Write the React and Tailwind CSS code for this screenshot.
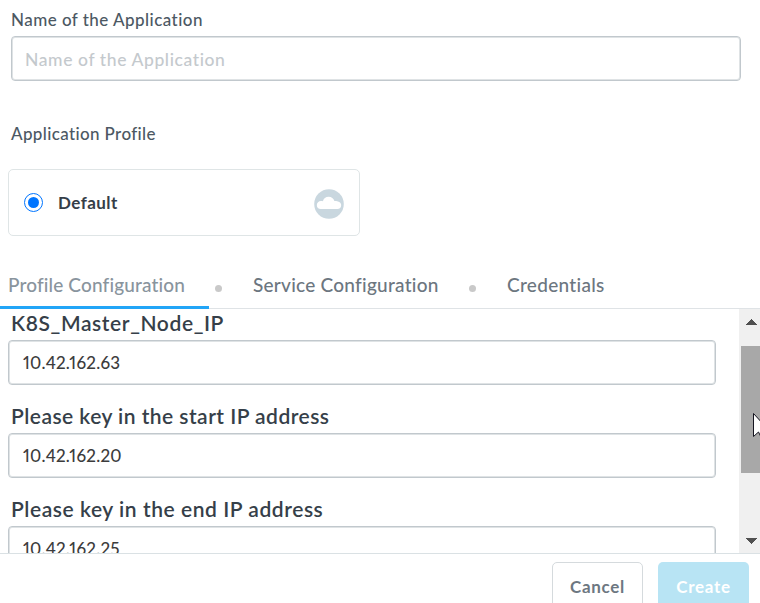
import React from "react";

const fields = [
  { label: "K8S_Master_Node_IP", value: "10.42.162.63", spacing: "tracking-[0.6px]" },
  { label: "Please key in the start IP address", value: "10.42.162.20", spacing: "tracking-[0.46px]" },
  { label: "Please key in the end IP address", value: "10.42.162.25", spacing: "tracking-[0.55px]" },
];

function CloudBadge() {
  return (
    <svg className="mt-[2px] h-[30px] w-[30px]" viewBox="0 0 30 30">
      <circle cx="15" cy="15" r="14.8" fill="#c9d7df" />
      <path
        d="M7 20a4.1 4.1 0 0 1-4.2-4c0-2.300 1.900-4.100 4.200-4.100.8 0 1.300.1 1.900.4A6 6 0 0 1 14.700 7.700c2.700 0 5 1.800 5.700 4.300.8-.2 1.800-.1 2.700.2 2.400.2 4.100 1.700 4.100 3.900a4 4 0 0 1-4.100 3.900z"
        fill="#fff"
      />
    </svg>
  );
}

function Field({ field }) {
  return (
    <div className="h-[93px] shrink-0">
      <div className={`flex h-[31px] items-center pb-[3px] pl-[3px] text-[21px] font-semibold text-[#363f49] ${field.spacing}`}>
        {field.label}
      </div>
      <div className="flex h-[45px] items-center rounded border border-[#c1c8cd] bg-white pl-[14px] text-[17px] font-medium tracking-[0.25px] text-[#3c3c3c] proportional-nums shadow-[inset_0_0_0_1px_#dfe3e5]">
        {field.value}
      </div>
    </div>
  );
}

function Dot() {
  return <span className="mt-[5px] h-[7px] w-[7px] shrink-0 rounded-full bg-[#c9c9c9]" />;
}

export default function App() {
  return (
    <div className="relative flex h-[603px] w-[760px] flex-col overflow-hidden bg-white font-['Lato','Liberation_Sans',sans-serif] whitespace-nowrap">
      <div className="flex h-[36px] shrink-0 items-center pt-[4px] pl-[11px] text-[17px] font-medium tracking-[0.46px] text-[#4c5863]">
        Name of the Application
      </div>
      <div className="mr-[19px] ml-[11px] flex h-[45px] shrink-0 items-center rounded border border-[#c1c8cd] pt-[4px] pl-[13px] text-[17.5px] font-medium tracking-[0.6px] text-[#c4c9cd] shadow-[inset_0_0_0_1px_#dfe3e5]">
        Name of the Application
      </div>
      <div className="mt-[40px] flex h-[26px] shrink-0 items-center pl-[11px] text-[17px] font-medium tracking-[0.37px] text-[#4c5863]">
        Application Profile
      </div>
      <div className="mt-[22px] ml-[8px] flex h-[67px] w-[352px] shrink-0 items-center rounded-[5px] border border-[#dfe5e6] pr-[15px] pl-[15px]">
        <span className="flex h-[19px] w-[19px] items-center justify-center rounded-full border border-[#0075ff]">
          <span className="h-[11px] w-[11px] rounded-full bg-[#0075ff]" />
        </span>
        <span className="ml-[15px] flex-1 text-[17px] font-bold tracking-[0.45px] text-[#353e48]">Default</span>
        <CloudBadge />
      </div>
      <div className="mt-[27px] flex h-[46px] shrink-0 border-b border-[#dfe3e6] text-[19px] font-medium text-[#6c7680]">
        <div className="-mb-px flex w-[209px] items-center border-b-[3px] border-[#22a5f7] pt-[2px] pl-[8px] tracking-[0.14px] text-[#89949d]">
          Profile Configuration
        </div>
        <div className="flex w-[43px] items-center pl-[6px]"><Dot /></div>
        <div className="flex w-[217px] items-center pl-px tracking-[0.25px]">Service Configuration</div>
        <div className="flex w-[37px] items-center"><Dot /></div>
        <div className="flex items-center pl-px tracking-[0.3px]">Credentials</div>
      </div>
      <div className="flex h-[244px] shrink-0 overflow-hidden">
        <div className="flex w-[716px] flex-col overflow-hidden pl-[8px]">
          {fields.map((field) => <Field key={field.label} field={field} />)}
        </div>
        <div className="ml-[23px] flex w-[21px] flex-col bg-[#f0f0f0] pl-[2px]">
          <svg className="h-[37px] w-[19px]" viewBox="0 0 19 37" shapeRendering="crispEdges">
            <path d="M4.500 16 10.500 10 16.500 16z" fill="#505050" />
          </svg>
          <div className="h-[127px] bg-[#a8a8a8]" />
          <svg className="mt-[57px] h-[20px] w-[19px]" viewBox="0 0 19 20" shapeRendering="crispEdges">
            <path d="M4.500 8H16.500L10.500 14z" fill="#505050" />
          </svg>
        </div>
      </div>
      <div className="flex h-[50px] shrink-0 justify-end gap-[15px] overflow-hidden border-t border-[#dae1e4] pt-[8px] pr-[11px] text-[17px] font-bold tracking-[0.7px]">
        <div className="flex h-[50px] w-[91px] shrink-0 items-center justify-center rounded-[5px] border border-[#d5dadd] text-[#6d7781]">Cancel</div>
        <div className="flex h-[50px] w-[91px] shrink-0 items-center justify-center rounded-[5px] bg-[#b8e4f4] text-white">Create</div>
      </div>
      <svg className="absolute top-[412px] left-[753px] h-[28px] w-[17px]" viewBox="0 0 17 28">
        <path d="M.5 1.500V24.500L5.500 20 9 27 12 25.500 9 18.500H16z" fill="#fff" stroke="#151520" />
      </svg>
    </div>
  );
}
